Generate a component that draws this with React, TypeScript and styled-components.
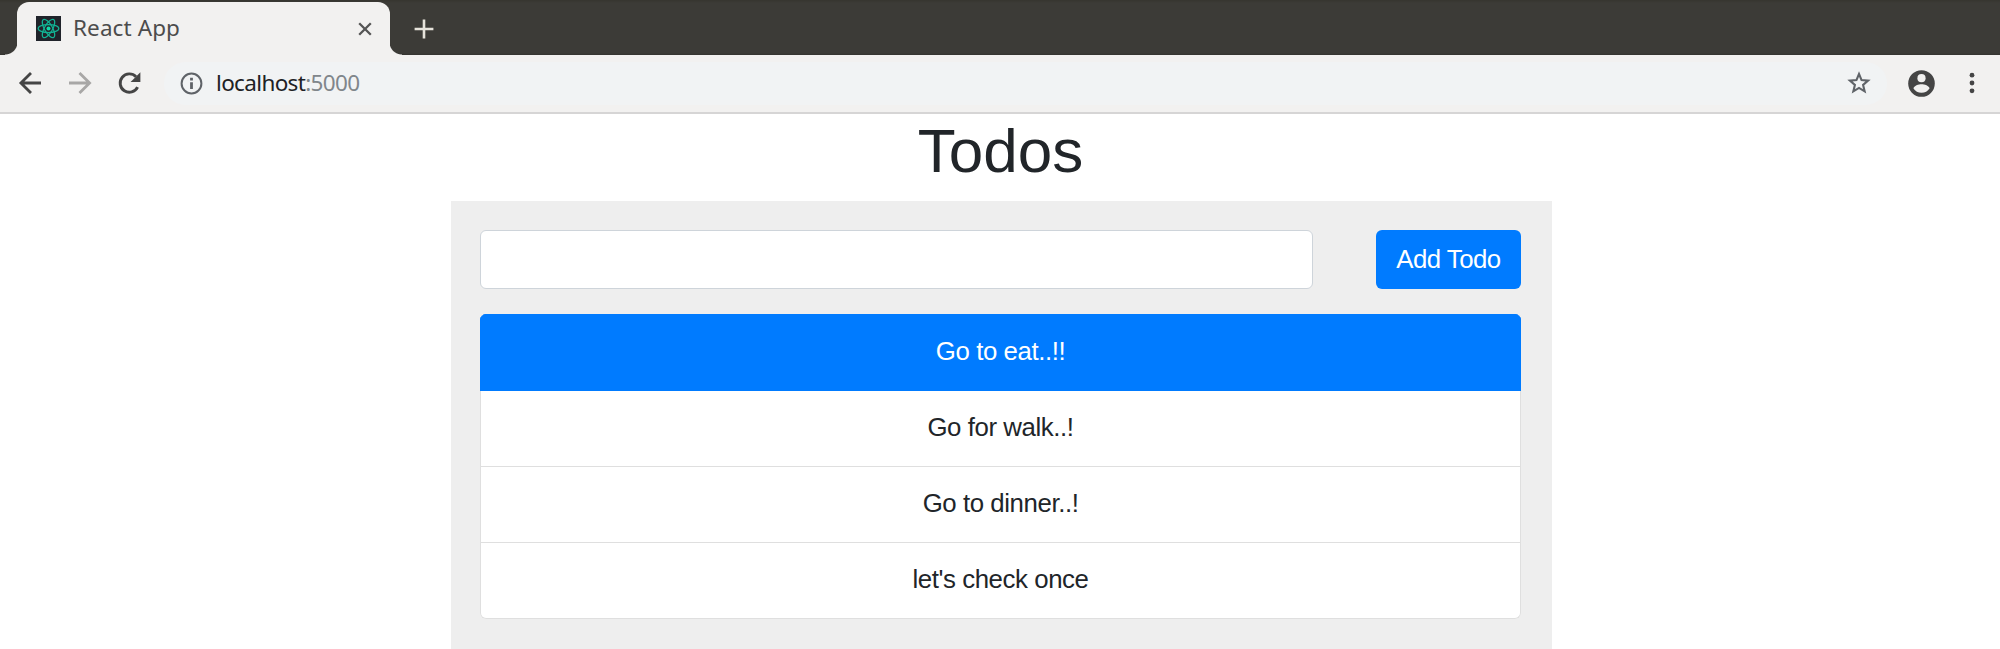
import React from "react";
import styled, { createGlobalStyle } from "styled-components";

const GlobalStyle = createGlobalStyle`
  *, *::before, *::after { box-sizing: border-box; }
  html, body { margin: 0; padding: 0; background: #fff; overflow: hidden; }
  body { font-family: "Liberation Sans", Arial, sans-serif; color: #212529; }
`;

const Window = styled.div`
  display: flex;
  flex-direction: column;
  width: 2000px;
  height: 649px;
  overflow: hidden;
`;

const TabStrip = styled.div`
  flex: none;
  display: flex;
  align-items: flex-end;
  height: 55px;
  padding-left: 5px;
  background: linear-gradient(#36352f 0, #3c3b37 3px, #3c3b37 53px, #34332f 55px);
`;

const TabCorner = styled.div<{ $side: "left" | "right" }>`
  flex: none;
  width: 13px;
  height: 13px;
  background: radial-gradient(
    circle at ${(p) => (p.$side === "left" ? "0 0" : "100% 0")},
    transparent 12px,
    #f2f1f0 13px
  );
`;

const Tab = styled.div`
  flex: none;
  display: flex;
  align-items: center;
  width: 373px;
  height: 53px;
  margin: 0 -1px 0 -1px;
  padding: 0 18px 0 19px;
  border-radius: 12px 12px 0 0;
  background: #f2f1f0;
`;

const TabTitle = styled.span`
  flex: 1;
  margin: 0 0 1px 12px;
  font: 400 22.5px/28px "Noto Sans", sans-serif;
  letter-spacing: 0.1px;
  color: #4c4c4c;
  white-space: nowrap;
`;

const NewTab = styled.div`
  display: flex;
  align-self: center;
  margin: 2px 0 0 12px;
`;

const Toolbar = styled.div`
  flex: none;
  display: flex;
  align-items: center;
  height: 59px;
  padding: 0 17px 1px 16px;
  background: #f2f1f0;
  border-bottom: 2px solid #d6d5d5;
`;

const NavButtons = styled.div`
  flex: none;
  display: flex;
  gap: 22px;
  width: 148px;
`;

const AddressBar = styled.div`
  flex: none;
  display: flex;
  align-items: center;
  width: 1723px;
  height: 43px;
  padding: 0 16px 0 16px;
  border-radius: 22px;
  background: #f1f3f4;
`;

const Address = styled.span`
  flex: 1;
  margin: 0 0 1px 13px;
  font: 400 22.5px/30px "Noto Sans", sans-serif;
  letter-spacing: -0.65px;
  color: #202124;
`;

const Port = styled.span`
  color: #80868b;
`;

const Actions = styled.div`
  display: flex;
  align-items: center;
  gap: 34px;
  margin-left: 21px;
`;

const Page = styled.main`
  flex: 1;
  display: flex;
  flex-direction: column;
  align-items: center;
`;

const Heading = styled.h1`
  margin: 0;
  height: 86.5px;
  padding-left: 1px;
  font-size: 62px;
  font-weight: 400;
  line-height: 74px;
  text-align: center;
`;

const Panel = styled.section`
  flex: 1;
  width: 1101px;
  padding: 29.5px 31px 0 29px;
  margin-left: 3px;
  background: #eeeeee;
`;

const Form = styled.form`
  display: flex;
  justify-content: space-between;
  margin-bottom: 25px;
`;

const TodoInput = styled.input`
  width: 833px;
  height: 59px;
  padding: 9px 18px;
  border: 1px solid #ced4da;
  border-radius: 6px;
  background: #fff;
  font: 400 24.8px "Liberation Sans", Arial, sans-serif;
  outline: none;
`;

const AddButton = styled.button`
  width: 145px;
  height: 59px;
  padding: 0 0 1px;
  border: 0;
  border-radius: 6px;
  background: #007bff;
  color: #fff;
  font: 400 25.8px/37px "Liberation Sans", Arial, sans-serif;
  letter-spacing: -0.52px;
  white-space: nowrap;
`;

const List = styled.ul`
  margin: 0;
  padding: 0;
  list-style: none;
  border-radius: 6px;
  overflow: hidden;
`;

const Item = styled.li<{ $active?: boolean }>`
  display: flex;
  justify-content: center;
  height: ${(p) => (p.$active ? 77 : 76)}px;
  padding-top: 18px;
  border: solid ${(p) => (p.$active ? "#007bff" : "#dfdfdf")};
  border-width: ${(p) => (p.$active ? "1px" : "0 1px 1px")};
  background: ${(p) => (p.$active ? "#007bff" : "#fff")};
  color: ${(p) => (p.$active ? "#fff" : "#212529")};
  font-size: 25.8px;
  letter-spacing: -0.42px;
  line-height: 37px;

  &:last-child { border-radius: 0 0 6px 6px; }
`;

const ReactLogo = () => (
  <svg width="25" height="25" viewBox="0 0 25 25">
    <rect width="25" height="25" fill="#20232a" />
    <g fill="none" stroke="#12b394" strokeWidth="1.25">
      <ellipse cx="12.5" cy="12.5" rx="10.3" ry="4" />
      <ellipse cx="12.5" cy="12.5" rx="10.3" ry="4" transform="rotate(60 12.5 12.5)" />
      <ellipse cx="12.5" cy="12.5" rx="10.3" ry="4" transform="rotate(120 12.5 12.5)" />
    </g>
    <circle cx="12.5" cy="12.5" r="2" fill="#10d9a8" />
  </svg>
);

const CloseIcon = () => (
  <svg width="14" height="14" viewBox="0 0 14 14" stroke="#555" strokeWidth="2.3">
    <path d="M1.2 1.2 12.8 12.8M12.8 1.2 1.2 12.8" />
  </svg>
);

const PlusIcon = () => (
  <svg width="20" height="20" viewBox="0 0 20 20" stroke="#e6e3db" strokeWidth="2.6">
    <path d="M10 .6V19.4M.6 10H19.4" />
  </svg>
);

const ArrowIcon = ({ forward = false }: { forward?: boolean }) => (
  <svg
    width="28"
    height="28"
    viewBox="0 0 28 28"
    fill="none"
    stroke={forward ? "#a8a7a6" : "#454545"}
    strokeWidth="2.8"
  >
    <path d={forward ? "M3 14H23M13.5 3.9 23.6 14 13.5 24.1" : "M25 14H5.2M15 3.9 4.9 14 15 24.1"} />
  </svg>
);

const ReloadIcon = () => (
  <svg width="28" height="28" viewBox="0 0 28 28">
    <path d="M21.6 18.2A9.2 9.2 0 1 1 20 7.7" fill="none" stroke="#454545" strokeWidth="2.9" />
    <path d="M24.4 3.2V13H14.6Z" fill="#454545" />
  </svg>
);

const InfoIcon = () => (
  <svg width="23" height="23" viewBox="0 0 23 23">
    <circle cx="11.5" cy="11.5" r="9.9" fill="none" stroke="#5f6368" strokeWidth="2" />
    <path d="M10.1 10.2H12.9V17H10.1ZM10.1 5.8H12.9V8.4H10.1Z" fill="#5f6368" />
  </svg>
);

const StarIcon = () => (
  <svg width="24" height="24" viewBox="0 0 24 24">
    <path
      d="M12 3 14.55 9.1 21.1 9.65 16.1 13.95 17.65 20.4 12 16.95 6.35 20.4 7.9 13.95 2.9 9.65 9.45 9.1Z"
      fill="none"
      stroke="#5f6368"
      strokeWidth="2.1"
    />
  </svg>
);

const ProfileIcon = () => (
  <svg width="27" height="27" viewBox="0 0 27 27">
    <circle cx="13.5" cy="13.5" r="13.3" fill="#454545" />
    <circle cx="13.5" cy="8.2" r="4.1" fill="#f2f1f0" />
    <path
      d="M5.5 18.4C5.6 15.7 10.8 14.2 13.5 14.2S21.4 15.7 21.5 18.4C19.8 21 16.9 22.7 13.5 22.7S7.2 21 5.5 18.4Z"
      fill="#f2f1f0"
    />
  </svg>
);

const MenuIcon = () => (
  <svg width="6" height="22" viewBox="0 0 6 22" fill="#454545">
    <circle cx="3" cy="3.2" r="2.4" />
    <circle cx="3" cy="11" r="2.4" />
    <circle cx="3" cy="18.8" r="2.4" />
  </svg>
);

const todos = ["Go to eat..!!", "Go for walk..!", "Go to dinner..!", "let's check once"];

export default function App() {
  return (
    <Window>
      <GlobalStyle />
      <TabStrip>
        <TabCorner $side="left" />
        <Tab>
          <ReactLogo />
          <TabTitle>React App</TabTitle>
          <CloseIcon />
        </Tab>
        <TabCorner $side="right" />
        <NewTab>
          <PlusIcon />
        </NewTab>
      </TabStrip>
      <Toolbar>
        <NavButtons>
          <ArrowIcon />
          <ArrowIcon forward />
          <ReloadIcon />
        </NavButtons>
        <AddressBar>
          <InfoIcon />
          <Address>
            localhost<Port>:5000</Port>
          </Address>
          <StarIcon />
        </AddressBar>
        <Actions>
          <ProfileIcon />
          <MenuIcon />
        </Actions>
      </Toolbar>
      <Page>
        <Heading>Todos</Heading>
        <Panel>
          <Form>
            <TodoInput aria-label="New todo" />
            <AddButton type="button">Add Todo</AddButton>
          </Form>
          <List>
            {todos.map((todo, index) => (
              <Item key={todo} $active={index === 0}>
                {todo}
              </Item>
            ))}
          </List>
        </Panel>
      </Page>
    </Window>
  );
}
